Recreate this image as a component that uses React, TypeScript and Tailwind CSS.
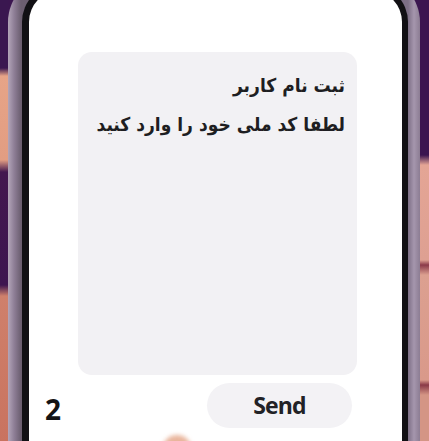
export default function App() {
  return (
    <div className="w-[429px] h-[441px] flex overflow-hidden bg-[#3b1650]">
      <div className="w-[8px] h-full shrink-0 bg-[linear-gradient(to_bottom,#3a1750_0px,#3a1750_68px,#e7a487_76px,#e29d82_160px,#43174f_172px,#3d1550_285px,#cf806b_296px,#c9735f_441px)]" />
      <div className="w-[412px] shrink-0 mt-[-24px] h-[480px] rounded-t-[46px] bg-[linear-gradient(to_right,#b3a6b9_0px,#8f7f97_6px,#6b5e70_13px,#7d6f86_400px,#a596ad_406px,#8c7d93_412px)] pl-[14px] pr-[12px] pt-[8px]">
        <div className="h-full rounded-t-[38px] bg-[#111014] pl-[7px] pr-[6px] pt-[6px]">
          <div className="h-full rounded-t-[32px] bg-white flex flex-col">
            <div className="shrink-0 mt-[62px] ml-[49px] mr-[45px] h-[323px] rounded-[14px] bg-[#f2f1f4] pt-[14px] pr-[12px] pl-[6px] text-right" dir="rtl">
              <p className="whitespace-nowrap text-[19px] leading-[39px] font-bold text-[#1e1e22] [font-family:'DejaVu_Sans_Condensed','DejaVu_Sans',sans-serif] tracking-[-0.3px]">
                ثبت نام کاربر
              </p>
              <p className="whitespace-nowrap text-[19px] leading-[39px] font-bold text-[#1e1e22] [font-family:'DejaVu_Sans_Condensed','DejaVu_Sans',sans-serif] tracking-[-0.3px]">
                لطفا کد ملی خود را وارد کنید
              </p>
            </div>
            <div className="shrink-0 mt-[8px] flex items-center justify-between pl-[16px] pr-[50px]">
              <span className="mt-[6px] text-[28px] leading-none font-bold text-[#141416] [font-family:'Open_Sans',sans-serif]">
                2
              </span>
              <div className="w-[145px] h-[45px] rounded-full bg-[#f3f2f5] flex items-center justify-center">
                <span className="text-[23px] font-bold text-[#222226] [font-family:'Open_Sans',sans-serif] tracking-[-0.8px]">
                  Send
                </span>
              </div>
            </div>
            <div className="shrink-0 mt-[7px] ml-[133px] w-[30px] h-[30px] rounded-full bg-[#e9b59c] blur-[2px]" />
          </div>
        </div>
      </div>
      <div className="w-[9px] h-full shrink-0 bg-[linear-gradient(to_bottom,#3b1450_0px,#3b1450_155px,#e4a595_165px,#dea092_260px,#8b3a4a_265px,#dca090_275px,#d9998a_380px,#8a3a48_385px,#d49585_395px,#d49585_441px)]" />
    </div>
  );
}
